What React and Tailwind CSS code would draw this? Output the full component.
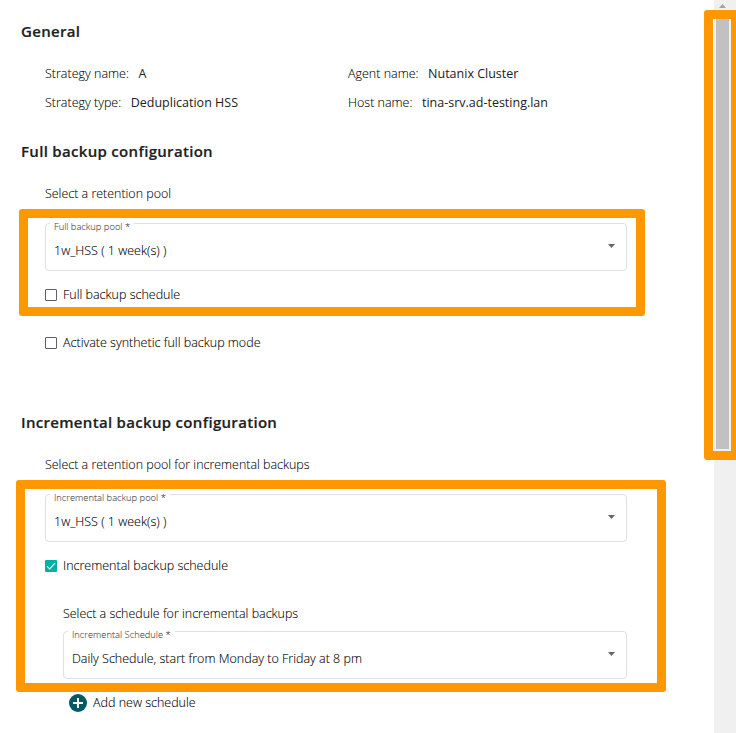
const font = 'font-["Open_Sans","Noto_Sans",sans-serif]';

function Heading({ children, className }) {
  return <h2 className={`ml-[21px] h-5 whitespace-nowrap text-[15px] leading-5 font-semibold tracking-[0.31px] text-[#212121] [-webkit-text-stroke:0.2px] ${className}`}>{children}</h2>;
}

function Detail({ label, value }) {
  return (
    <div className="flex h-5 items-center gap-[9.5px] whitespace-nowrap text-[12.5px] leading-5">
      <dt className="font-light text-black [-webkit-text-stroke:0.08px]">{label}</dt>
      <dd className="font-medium">{value}</dd>
    </div>
  );
}

function SelectField({ label, value, notch, className }) {
  return (
    <div className={`flex h-12 flex-col rounded-[4px] border border-[#e0e0e0] ${className}`}>
      <div className={`-mt-[2px] ml-1 h-[10px] bg-white pl-1 whitespace-nowrap text-[9.35px] leading-[10px] font-light text-[#444] [-webkit-text-stroke:0.08px] ${notch}`}>{label}</div>
      <div className="flex h-[38px] items-center justify-between pr-[11px] pl-2 text-[12.5px] font-light text-black [-webkit-text-stroke:0.1px]">
        <span>{value}</span>
        <svg className="-mt-[11px] h-1 w-[7px]" viewBox="0 0 7 4" fill="#666"><path d="M0 0H7L3.5 4Z" /></svg>
      </div>
    </div>
  );
}

function Check({ label, checked, className }) {
  return (
    <label className={`ml-[45px] flex h-5 items-center gap-1.5 whitespace-nowrap text-[12.5px] leading-5 font-light text-black [-webkit-text-stroke:0.1px] ${className}`}>
      {checked ? (
        <span className="flex h-3 w-3 items-center justify-center rounded-[1px] bg-[#00b0a6]">
          <svg className="h-3 w-3" viewBox="0 0 12 12" fill="none" stroke="white" strokeWidth="1.2"><path d="M2 6.2 4.6 8.8 10 3.2" /></svg>
        </span>
      ) : (
        <span className="h-3 w-3 rounded-[1px] border border-[#616161]" />
      )}
      <span>{label}</span>
    </label>
  );
}

export default function App() {
  return (
    <div className={`relative flex h-[733px] w-[736px] overflow-hidden bg-white text-[#212121] ${font}`}>
      <main className="h-full w-[714px]">
        <Heading className="mt-[21px]">General</Heading>
        <dl className="mt-[23px] ml-[45px] grid grid-cols-[303px_1fr] gap-y-[9px]">
          <Detail label="Strategy name:" value="A" />
          <Detail label="Agent name:" value="Nutanix Cluster" />
          <Detail label="Strategy type:" value="Deduplication HSS" />
          <Detail label="Host name:" value="tina-srv.ad-testing.lan" />
        </dl>
        <Heading className="mt-[28px]">Full backup configuration</Heading>
        <p className="mt-[23px] ml-[45px] h-5 text-[12.45px] leading-5 font-light text-black [-webkit-text-stroke:0.08px]">Select a retention pool</p>
        <SelectField className="mt-[19px] ml-[45px] w-[582px]" notch="w-[84px]" label="Full backup pool *" value="1w_HSS ( 1 week(s) )" />
        <Check className="mt-[14px]" label="Full backup schedule" />
        <Check className="mt-7" label="Activate synthetic full backup mode" />
        <Heading className="mt-[59px]">Incremental backup configuration</Heading>
        <p className="mt-[23px] ml-[45px] h-5 text-[12.45px] leading-5 font-light text-black [-webkit-text-stroke:0.08px]">Select a retention pool for incremental backups</p>
        <SelectField className="mt-[19px] ml-[45px] w-[582px]" notch="w-[120px]" label="Incremental backup pool *" value="1w_HSS ( 1 week(s) )" />
        <Check className="mt-[14px]" label="Incremental backup schedule" checked />
        <p className="mt-7 ml-[63px] h-5 text-[12.45px] leading-5 font-light text-black [-webkit-text-stroke:0.1px]">Select a schedule for incremental backups</p>
        <SelectField className="mt-[7px] ml-[63px] w-[564px]" notch="w-[107px]" label="Incremental Schedule *" value="Daily Schedule, start from Monday to Friday at 8 pm" />
        <button className="mt-[14px] ml-[69px] flex h-5 items-center gap-1.5 whitespace-nowrap text-[12.5px] leading-5 font-light text-black [-webkit-text-stroke:0.1px]">
          <svg className="h-[18px] w-[18px]" viewBox="0 0 18 18"><circle cx="9" cy="9" r="9" fill="#005b64" /><path d="M9 4V14M4 9H14" stroke="white" strokeWidth="2" /></svg>
          <span>Add new schedule</span>
        </button>
      </main>
      <aside className="flex h-full w-[22px] flex-col bg-[#f0f0f0] pl-[2px]">
        <svg className="mt-1 ml-[3px] h-1 w-[7px]" viewBox="0 0 7 4" fill="#a3a3a3"><path d="M0 4 3.5 0 7 4Z" /></svg>
        <div className="mt-[11px] h-[430px] w-[13px] bg-[#c1c1c1]" />
      </aside>
      <div className="absolute top-[209px] left-[19px] h-[107px] w-[626px] rounded-[3px] border-9 border-[#ff9800]" />
      <div className="absolute top-[480px] left-[16px] h-[212px] w-[650px] rounded-[3px] border-9 border-[#ff9800]" />
      <div className="absolute top-[10px] left-[704px] h-[450px] w-9 rounded-[3px] border-9 border-[#ff9800]" />
    </div>
  );
}
